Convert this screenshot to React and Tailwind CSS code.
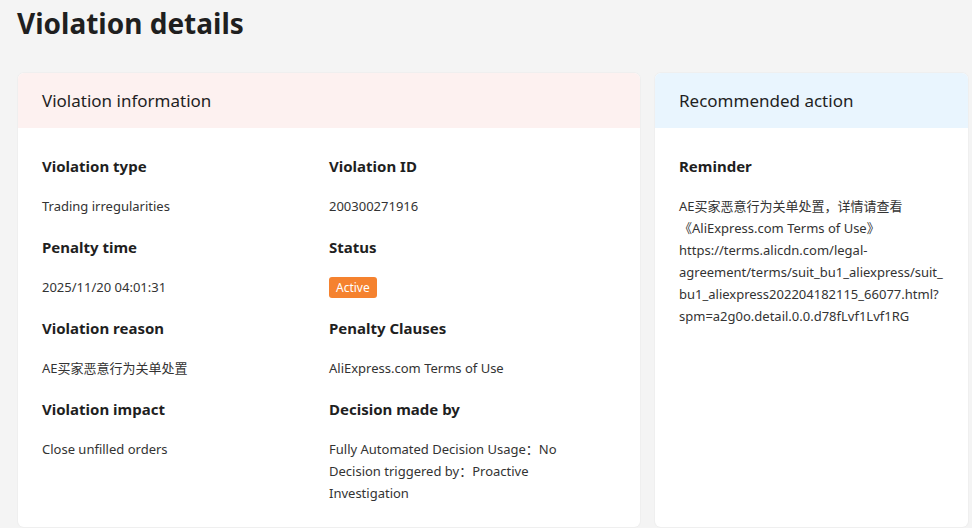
export default function App() {
  const fields = [
    { label: "Violation type", value: "Trading irregularities" },
    { label: "Violation ID", value: "200300271916" },
    { label: "Penalty time", value: "2025/11/20 04:01:31" },
    { label: "Status", badge: "Active" },
    { label: "Violation reason", value: "AE买家恶意行为关单处置" },
    { label: "Penalty Clauses", value: "AliExpress.com Terms of Use" },
    { label: "Violation impact", value: "Close unfilled orders" },
    {
      label: "Decision made by",
      lines: [
        "Fully Automated Decision Usage：No",
        "Decision triggered by：Proactive",
        "Investigation",
      ],
    },
  ];

  const reminder = [
    "AE买家恶意行为关单处置，详情请查看",
    "《AliExpress.com Terms of Use》",
    "https://terms.alicdn.com/legal-",
    "agreement/terms/suit_bu1_aliexpress/suit_",
    "bu1_aliexpress202204182115_66077.html?",
    "spm=a2g0o.detail.0.0.d78fLvf1Lvf1RG",
  ];

  return (
    <div
      className="min-h-screen bg-[#f4f4f4] pl-[18px] text-[#1f1f1f] overflow-hidden"
      style={{ fontFamily: '"Noto Sans", "Noto Sans CJK SC", sans-serif' }}
    >
      <h1 className="h-[73px] pt-[4px] text-[28px] leading-[38px] font-bold -ml-[1px]">
        Violation details
      </h1>

      <div className="flex gap-[15px] items-start">
        {/* left card */}
        <div className="w-[622px] shrink-0 bg-white rounded-md overflow-hidden shadow-[0_0_0_1px_#efefef]">
          <div className="h-[55px] bg-[#fdf1f0] px-6 flex items-center text-[17px]">
            Violation information
          </div>
          <div className="pt-[27px] px-6 pb-[23px] grid grid-cols-2 gap-y-[19px]">
            {fields.map((f) => (
              <div key={f.label} className="flex flex-col">
                <div className="text-[15px] leading-[22px] font-bold mb-[18px]">
                  {f.label}
                </div>
                {f.value && (
                  <div className="text-[13px] leading-[22px] text-[#333]">
                    {f.value}
                  </div>
                )}
                {f.badge && (
                  <div className="h-[22px] flex items-center">
                    <span className="bg-[#f5822f] text-white text-[12px] leading-[21px] px-[7px] rounded-[3px]">
                      {f.badge}
                    </span>
                  </div>
                )}
                {f.lines &&
                  f.lines.map((l) => (
                    <div key={l} className="text-[13px] leading-[22px] text-[#333]">
                      {l}
                    </div>
                  ))}
              </div>
            ))}
          </div>
        </div>

        {/* right card */}
        <div className="w-[313px] shrink-0 bg-white rounded-md overflow-hidden shadow-[0_0_0_1px_#efefef] self-stretch">
          <div className="h-[55px] bg-[#e9f5fe] px-6 flex items-center text-[17px]">
            Recommended action
          </div>
          <div className="pt-[27px] px-6">
            <div className="text-[15px] leading-[22px] font-bold mb-[18px]">Reminder</div>
            {reminder.map((l) => (
              <div key={l} className="text-[13px] leading-[22px] text-[#333] whitespace-nowrap">
                {l}
              </div>
            ))}
          </div>
        </div>
      </div>
    </div>
  );
}
